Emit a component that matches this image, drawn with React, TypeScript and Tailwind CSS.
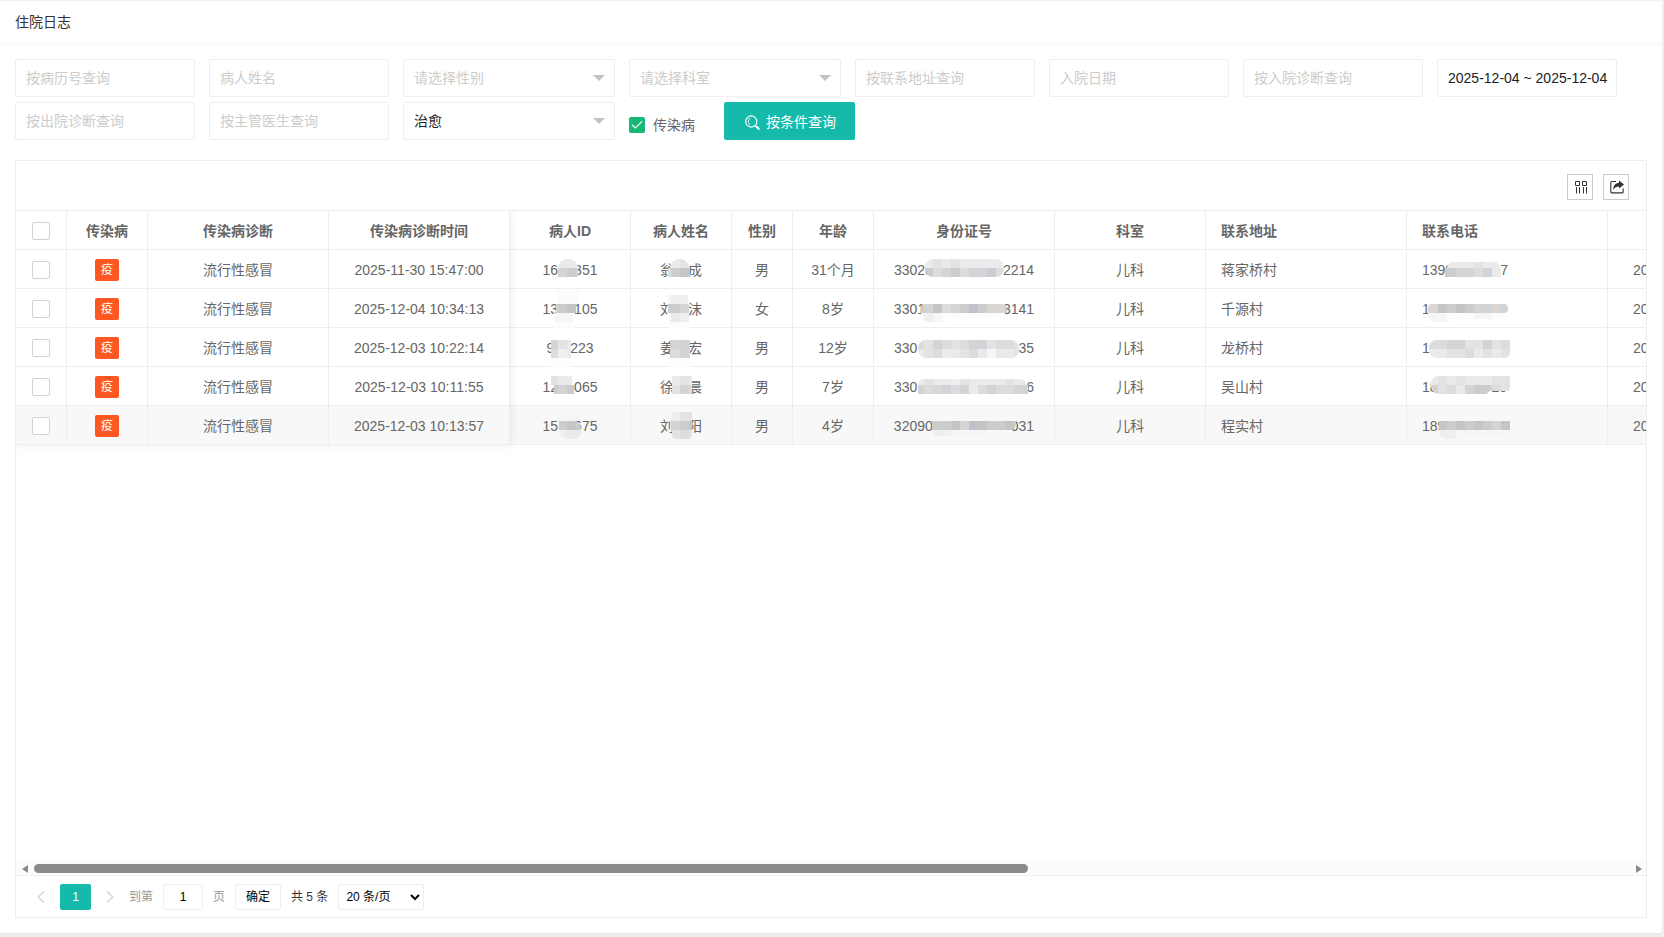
import { useId } from 'react';
import type { ReactNode } from 'react';

interface Band {
  x: number;
  y: number;
  w: number;
  h?: number;
  tones: string;
  // corner radii: top left, top right, bottom right, bottom left
  r?: [number, number, number, number];
}

interface Masked {
  pre: string;
  gap: number;
  post: string;
  bands: Band[];
}

interface Patient {
  time: string;
  id: Masked;
  name: Masked;
  sex: string;
  age: string;
  card: Masked;
  dept: string;
  address: string;
  phone: Masked;
}

const TONES: Record<string, string> = {
  a: '#fcfcfc',
  b: '#f6f6f6',
  c: '#efefef',
  d: '#eaeaea',
  e: '#e3e3e3',
  f: '#dcdcdc',
  g: '#d4d4d4',
  h: '#cccccc',
  i: '#c5c5c5',
  j: '#bfc2c8',
  k: '#d0d3d8',
  l: '#e9ebef',
  m: '#dad7d2',
};

const TILE = 9;

const patients: Patient[] = [
  {
    time: '2025-11-30 15:47:00',
    id: {
      pre: '16',
      gap: 16,
      post: '351',
      bands: [
        { x: 48, y: 9, w: 20, tones: 'ddd', r: [9, 9, 0, 0] },
        { x: 48, y: 18, w: 20, tones: 'ghg' },
      ],
    },
    name: {
      pre: '翁',
      gap: 14,
      post: '成',
      bands: [
        { x: 39, y: 9, w: 19, tones: 'dde', r: [9, 9, 0, 0] },
        { x: 37, y: 18, w: 22, tones: 'fhih' },
      ],
    },
    sex: '男',
    age: '31个月',
    card: {
      pre: '33028',
      gap: 70,
      post: '2214',
      bands: [
        { x: 51, y: 9, w: 79, tones: 'dededddlld', r: [8, 8, 0, 0] },
        { x: 51, y: 18, w: 79, tones: 'hfghfgkhf', r: [0, 0, 8, 8] },
      ],
    },
    dept: '儿科',
    address: '蒋家桥村',
    phone: {
      pre: '1399',
      gap: 47,
      post: '7',
      bands: [
        { x: 40, y: 12, w: 53, h: 6, tones: 'dddeldd', r: [6, 6, 0, 0] },
        { x: 38, y: 18, w: 56, tones: 'hhggfkdf' },
      ],
    },
  },
  {
    time: '2025-12-04 10:34:13',
    id: {
      pre: '13',
      gap: 16,
      post: '105',
      bands: [
        { x: 48, y: 0, w: 20, h: 15, tones: 'aaa' },
        { x: 46, y: 15, w: 20, tones: 'ghih' },
        { x: 44, y: 24, w: 20, tones: 'bbb' },
        { x: 44, y: 33, w: 20, h: 6, tones: 'aaa' },
      ],
    },
    name: {
      pre: '刘',
      gap: 14,
      post: '沫',
      bands: [
        { x: 37, y: 6, w: 20, tones: 'bccb' },
        { x: 37, y: 15, w: 21, tones: 'hhgf' },
        { x: 38, y: 24, w: 20, tones: 'bdcb' },
        { x: 38, y: 33, w: 20, h: 6, tones: 'aaa' },
      ],
    },
    sex: '女',
    age: '8岁',
    card: {
      pre: '3301',
      gap: 78,
      post: '3141',
      bands: [
        { x: 47, y: 15, w: 86, tones: 'hgifghjhmm', r: [4, 5, 0, 0] },
        { x: 47, y: 24, w: 30, tones: 'bcba', r: [0, 0, 9, 8] },
        { x: 77, y: 24, w: 50, h: 5, tones: 'aaaaaa' },
      ],
    },
    dept: '儿科',
    address: '千源村',
    phone: {
      pre: '1',
      gap: 78,
      post: '',
      bands: [
        { x: 21, y: 15, w: 80, tones: 'gmihihgkmk', r: [4, 4, 4, 0] },
        { x: 21, y: 24, w: 24, tones: 'bbba', r: [0, 0, 4, 7] },
        { x: 45, y: 24, w: 52, h: 6, tones: 'aaabba', r: [0, 0, 5, 0] },
      ],
    },
  },
  {
    time: '2025-12-03 10:22:14',
    id: {
      pre: '9',
      gap: 16,
      post: '223',
      bands: [
        { x: 41, y: 12, w: 20, tones: 'gelf' },
        { x: 41, y: 21, w: 20, tones: 'fcde' },
        { x: 41, y: 30, w: 20, tones: 'aaa' },
      ],
    },
    name: {
      pre: '姜',
      gap: 14,
      post: '宏',
      bands: [
        { x: 39, y: 12, w: 20, tones: 'hgkg' },
        { x: 39, y: 21, w: 20, tones: 'gfgf' },
        { x: 39, y: 30, w: 20, tones: 'aaa' },
      ],
    },
    sex: '男',
    age: '12岁',
    card: {
      pre: '330',
      gap: 101,
      post: '35',
      bands: [
        { x: 44, y: 12, w: 101, tones: 'fegfefgkeffe', r: [8, 8, 0, 0] },
        { x: 44, y: 21, w: 101, tones: 'defldefdbdde', r: [0, 0, 8, 8] },
      ],
    },
    dept: '儿科',
    address: '龙桥村',
    phone: {
      pre: '1',
      gap: 78,
      post: '',
      bands: [
        { x: 22, y: 12, w: 81, tones: 'ffggeekefe', r: [8, 0, 0, 0] },
        { x: 22, y: 21, w: 81, tones: 'ddeeflede', r: [0, 0, 5, 8] },
      ],
    },
  },
  {
    time: '2025-12-03 10:11:55',
    id: {
      pre: '12',
      gap: 16,
      post: '065',
      bands: [
        { x: 41, y: 9, w: 21, tones: 'edde' },
        { x: 44, y: 18, w: 20, tones: 'hghg' },
      ],
    },
    name: {
      pre: '徐',
      gap: 14,
      post: '晨',
      bands: [
        { x: 41, y: 9, w: 20, tones: 'delf' },
        { x: 41, y: 18, w: 20, tones: 'egfg' },
      ],
    },
    sex: '男',
    age: '7岁',
    card: {
      pre: '330',
      gap: 109,
      post: '6',
      bands: [
        { x: 44, y: 12, w: 108, h: 6, tones: 'deddcedldde', r: [6, 6, 0, 0] },
        { x: 44, y: 18, w: 110, tones: 'gfmkfglfgffg' },
      ],
    },
    dept: '儿科',
    address: '吴山村',
    phone: {
      pre: '18',
      gap: 54,
      post: '20',
      bands: [
        { x: 24, y: 9, w: 79, tones: 'dededddeed', r: [7, 0, 0, 0] },
        { x: 24, y: 18, w: 59, tones: 'gefdghhg', r: [0, 0, 5, 8] },
        { x: 83, y: 18, w: 20, h: 6, tones: 'gfef', r: [0, 0, 3, 0] },
      ],
    },
  },
  {
    time: '2025-12-03 10:13:57',
    id: {
      pre: '15',
      gap: 16,
      post: '675',
      bands: [
        { x: 48, y: 4, w: 21, h: 11, tones: 'bbbb', r: [4, 0, 0, 0] },
        { x: 49, y: 15, w: 22, tones: 'hihg', r: [0, 7, 0, 0] },
        { x: 50, y: 24, w: 21, tones: 'cddc', r: [0, 0, 7, 7] },
      ],
    },
    name: {
      pre: '刘',
      gap: 14,
      post: '阳',
      bands: [
        { x: 41, y: 6, w: 20, tones: 'ceec' },
        { x: 41, y: 15, w: 20, tones: 'ghih' },
        { x: 41, y: 24, w: 20, tones: 'efee', r: [0, 0, 4, 4] },
      ],
    },
    sex: '男',
    age: '4岁',
    card: {
      pre: '32090',
      gap: 78,
      post: '031',
      bands: [
        { x: 58, y: 15, w: 84, tones: 'hhhigjihhih', r: [0, 0, 6, 0] },
        { x: 58, y: 24, w: 55, h: 6, tones: 'bccbbbb', r: [0, 0, 6, 6] },
      ],
    },
    dept: '儿科',
    address: '程实村',
    phone: {
      pre: '189',
      gap: 62,
      post: '',
      bands: [
        { x: 32, y: 15, w: 71, tones: 'ihihihgik' },
        { x: 32, y: 24, w: 22, tones: 'ccb', r: [0, 0, 6, 8] },
        { x: 54, y: 24, w: 49, h: 6, tones: 'bbbbbb' },
      ],
    },
  },
];

function bandPath({ x, y, w, h = TILE, r = [0, 0, 0, 0] }: Band) {
  const [tl, tr, br, bl] = r;
  return [
    `M${x + tl} ${y}H${x + w - tr}`,
    `A${tr} ${tr} 0 0 1 ${x + w} ${y + tr}V${y + h - br}`,
    `A${br} ${br} 0 0 1 ${x + w - br} ${y + h}H${x + bl}`,
    `A${bl} ${bl} 0 0 1 ${x} ${y + h - bl}V${y + tl}`,
    `A${tl} ${tl} 0 0 1 ${x + tl} ${y}Z`,
  ].join('');
}

// Pixelated patch over the private part of a value
function Mosaic({ bands, anchor }: { bands: Band[]; anchor: number }) {
  const id = useId();
  return (
    <svg className="pointer-events-none absolute left-0 top-0 h-full w-full overflow-visible" shapeRendering="crispEdges" aria-hidden="true">
      {bands.map((band, i) => {
        const start = band.x - ((band.x - anchor) % TILE);
        const count = Math.ceil((band.x + band.w - start) / TILE);
        return (
          <g key={i} clipPath={`url(#${id}-${i})`}>
            <clipPath id={`${id}-${i}`}>
              <path d={bandPath(band)} />
            </clipPath>
            {Array.from({ length: count }, (_, n) => (
              <rect
                key={n}
                x={start + n * TILE}
                y={band.y}
                width={TILE}
                height={band.h ?? TILE}
                fill={TONES[band.tones[n % band.tones.length]]}
              />
            ))}
          </g>
        );
      })}
    </svg>
  );
}

const cell = 'relative h-[39px] border-b border-r border-[#eeeeee] p-0 pt-0.5 whitespace-nowrap';

function MaskedCell({ value, anchor, left = false }: { value: Masked; anchor: number; left?: boolean }) {
  return (
    <td className={`${cell} ${left ? 'pl-[15px] text-left' : 'text-center'}`}>
      {value.pre}
      <span className="inline-block" style={{ width: value.gap }} />
      {value.post}
      <Mosaic bands={value.bands} anchor={anchor} />
    </td>
  );
}

function TextField({ label }: { label: string }) {
  return (
    <input
      type="text"
      aria-label={label}
      placeholder={label}
      className="h-[38px] w-[180px] rounded-xs border border-[#eeeeee] bg-white px-2.5 text-sm text-[#222] outline-none placeholder:text-[#cccccc]"
    />
  );
}

function SelectField({ label, value }: { label: string; value?: string }) {
  return (
    <div className="relative w-[212px]">
      <select
        aria-label={label}
        className={`h-[38px] w-full appearance-none rounded-xs border border-[#eeeeee] bg-white pl-2.5 pr-8 text-sm outline-none ${
          value ? 'text-[#222]' : 'text-[#cccccc]'
        }`}
      >
        <option>{value ?? label}</option>
      </select>
      <span className="pointer-events-none absolute right-2.5 top-4 border-x-6 border-t-6 border-x-transparent border-t-[#c2c2c2]" />
    </div>
  );
}

function SearchIcon() {
  return (
    <svg className="h-[15px] w-[15px]" viewBox="0 0 15 15" fill="none" stroke="currentColor" aria-hidden="true">
      <circle cx="6.3" cy="6.5" r="5.6" strokeWidth="1.1" />
      <path d="M5.2 3.2A3.6 3.6 0 0 0 5.2 9.6" strokeWidth="0.9" />
      <path d="M10.4 10.6L11.6 11.8" strokeWidth="1.1" />
      <path d="M11.6 11.8L13.7 13.8" strokeWidth="2.2" strokeLinecap="round" />
    </svg>
  );
}

function ColumnsIcon() {
  return (
    <svg className="h-3.5 w-3.5" viewBox="0 0 14 14" fill="none" stroke="currentColor" aria-hidden="true">
      <path d="M1.5 1.5h4v4h-4zM8.5 1.5h4v4h-4zM2.5 7v6.5M5.5 7v6.5M9.5 7v6.5M12.5 7v6.5" />
    </svg>
  );
}

function ExportIcon() {
  return (
    <svg className="h-3.5 w-3.5" viewBox="0 0 14 14" fill="none" stroke="currentColor" aria-hidden="true">
      <path d="M6 1.5H2A1.2 1.2 0 0 0 .8 2.7v9A1.2 1.2 0 0 0 2 12.9h10a1.2 1.2 0 0 0 1.2-1.2V8.5" strokeWidth="1.1" />
      <path d="M9 .6L14 4.6L9 8.4V6.4C6.6 6.4 4.8 7.2 3.2 9.8C3.2 5.8 5.4 2.9 9 2.7Z" fill="currentColor" stroke="none" />
    </svg>
  );
}

function PageArrow({ d }: { d: string }) {
  return (
    <svg className="h-3 w-2" viewBox="0 0 8 12" fill="none" stroke="currentColor" strokeWidth="1.2" aria-hidden="true">
      <path d={d} />
    </svg>
  );
}

function ToolButton({ title, children }: { title: string; children: ReactNode }) {
  return (
    <button type="button" title={title} className="flex h-[26px] w-[26px] items-center justify-center border border-[#cccccc] pl-0.5 text-[#333]">
      {children}
    </button>
  );
}

function RowCheckbox({ label }: { label: string }) {
  return (
    <input
      type="checkbox"
      aria-label={label}
      className="mx-auto block h-[18px] w-[18px] appearance-none rounded-xs border border-[#d2d2d2] bg-white"
    />
  );
}

export default function App() {
  const rowBg = (i: number) => (i === patients.length - 1 ? 'bg-[#f8f8f8]' : 'bg-white');

  return (
    <div className="flex min-h-screen flex-col bg-[#f0f0f0] pb-1 pr-0.5 pt-px font-['Liberation_Sans','Noto_Sans_CJK_SC',sans-serif] text-sm text-[#666]">
      <main className="flex flex-1 flex-col rounded-xs bg-white shadow-xs">
        <header className="border-b border-[#f6f6f6] px-[15px]">
          <h1 className="h-[42px] text-sm leading-[42px] text-[#333]">住院日志</h1>
        </header>

        <div className="flex flex-1 flex-col p-[15px]">
          {/* Filters */}
          <form className="flex flex-wrap gap-x-3.5 gap-y-[5px]">
            <TextField label="按病历号查询" />
            <TextField label="病人姓名" />
            <SelectField label="请选择性别" />
            <SelectField label="请选择科室" />
            <TextField label="按联系地址查询" />
            <TextField label="入院日期" />
            <TextField label="按入院诊断查询" />
            <input
              type="text"
              aria-label="日期范围"
              defaultValue="2025-12-04 ~ 2025-12-04"
              className="h-[38px] w-[180px] rounded-xs border border-[#eeeeee] pl-2.5 text-sm text-[#222] outline-none"
            />
            <TextField label="按出院诊断查询" />
            <TextField label="按主管医生查询" />
            <SelectField label="治疗结果" value="治愈" />
            <label className="flex w-[81px] items-center gap-2 pt-2">
              <span className="relative h-4 w-4">
                <input type="checkbox" defaultChecked className="block h-4 w-4 appearance-none rounded-xs bg-[#16b777]" />
                <svg className="pointer-events-none absolute inset-0 h-4 w-4" viewBox="0 0 16 16" fill="none" stroke="#fff" strokeWidth="1.2" aria-hidden="true">
                  <path d="M2.8 7.6L6.2 11L13.2 4.4" />
                </svg>
              </span>
              传染病
            </label>
            <button type="button" className="flex h-[38px] items-center gap-1.5 rounded-xs bg-[#16baaa] pl-[21px] pr-[19px] pt-0.5 text-white">
              <SearchIcon />
              按条件查询
            </button>
          </form>

          {/* Table */}
          <section className="mt-5 flex flex-1 flex-col border border-[#eeeeee]">
            <div className="flex h-[50px] items-center justify-end gap-2.5 border-b border-[#eeeeee] pr-[17px] pt-[3px]">
              <ToolButton title="筛选列">
                <ColumnsIcon />
              </ToolButton>
              <ToolButton title="导出">
                <ExportIcon />
              </ToolButton>
            </div>

            <div className="flex flex-1 items-start overflow-hidden">
              {/* Fixed columns */}
              <table className="relative z-10 w-[494px] shrink-0 table-fixed border-separate border-spacing-0 bg-white text-center shadow-[1px_0_8px_rgba(0,0,0,0.08)]">
                <colgroup>
                  <col className="w-[51px]" />
                  <col className="w-[81px]" />
                  <col className="w-[181px]" />
                  <col className="w-[181px]" />
                </colgroup>
                <thead>
                  <tr>
                    <th className={cell}>
                      <RowCheckbox label="全选" />
                    </th>
                    <th className={cell}>传染病</th>
                    <th className={cell}>传染病诊断</th>
                    <th className={cell}>传染病诊断时间</th>
                  </tr>
                </thead>
                <tbody>
                  {patients.map((p, i) => (
                    <tr key={p.time} className={rowBg(i)}>
                      <td className={cell}>
                        <RowCheckbox label={`选择 ${p.time}`} />
                      </td>
                      <td className={cell}>
                        <span className="mx-auto block h-[22px] w-6 rounded-xs bg-[#ff5722] text-xs leading-[22px] text-white">疫</span>
                      </td>
                      <td className={cell}>流行性感冒</td>
                      <td className={cell}>{p.time}</td>
                    </tr>
                  ))}
                </tbody>
              </table>

              {/* Scrolling columns */}
              <div className="min-w-0 flex-1 overflow-hidden">
                <table className="w-[1279px] table-fixed border-separate border-spacing-0 text-center">
                  <colgroup>
                    <col className="w-[121px]" />
                    <col className="w-[101px]" />
                    <col className="w-[61px]" />
                    <col className="w-[81px]" />
                    <col className="w-[181px]" />
                    <col className="w-[151px]" />
                    <col className="w-[201px]" />
                    <col className="w-[201px]" />
                    <col className="w-[181px]" />
                  </colgroup>
                  <thead>
                    <tr>
                      <th className={cell}>病人ID</th>
                      <th className={cell}>病人姓名</th>
                      <th className={cell}>性别</th>
                      <th className={cell}>年龄</th>
                      <th className={cell}>身份证号</th>
                      <th className={cell}>科室</th>
                      <th className={`${cell} pl-[15px] text-left`}>联系地址</th>
                      <th className={`${cell} pl-[15px] text-left`}>联系电话</th>
                      <th className={cell} />
                    </tr>
                  </thead>
                  <tbody>
                    {patients.map((p, i) => (
                      <tr key={p.time} className={rowBg(i)}>
                        <MaskedCell value={p.id} anchor={3} />
                        <MaskedCell value={p.name} anchor={4} />
                        <td className={cell}>{p.sex}</td>
                        <td className={cell}>{p.age}</td>
                        <MaskedCell value={p.card} anchor={5} />
                        <td className={cell}>{p.dept}</td>
                        <td className={`${cell} pl-[15px] text-left`}>{p.address}</td>
                        <MaskedCell value={p.phone} anchor={4} left />
                        <td className={`${cell} pl-[25px] text-left`}>20</td>
                      </tr>
                    ))}
                  </tbody>
                </table>
              </div>
            </div>

            {/* Horizontal scrollbar */}
            <div className="flex h-3.5 items-center gap-1.5 bg-[#fcfcfc] pl-1.5 pr-1 pt-px">
              <span className="border-y-4 border-r-6 border-y-transparent border-r-[#8b8b8b]" />
              <div className="flex-1">
                <div className="h-[9px] w-[62.3%] rounded-full bg-[#8b8b8b]" />
              </div>
              <span className="border-y-4 border-l-6 border-y-transparent border-l-[#8b8b8b]" />
            </div>

            {/* Pagination */}
            <nav className="flex h-[42px] items-center border-t border-[#eeeeee] pl-[17px] pt-px text-xs text-[#999]">
              <button type="button" title="上一页" className="mr-[11px] flex w-4 justify-center text-[#d2d2d2]">
                <PageArrow d="M7 .5L1.2 6L7 11.5" />
              </button>
              <button type="button" className="h-[26px] w-[31px] rounded-xs bg-[#16baaa] text-white">
                1
              </button>
              <button type="button" title="下一页" className="flex w-[38px] justify-center text-[#d2d2d2]">
                <PageArrow d="M1 .5L6.8 6L1 11.5" />
              </button>
              <label className="flex items-center gap-2.5">
                到第
                <input
                  type="text"
                  defaultValue="1"
                  className="h-[26px] w-10 rounded-xs border border-[#eeeeee] text-center text-xs text-black outline-none"
                />
                页
              </label>
              <button type="button" className="ml-2.5 h-[26px] w-[46px] rounded-xs border border-[#eeeeee] text-black">
                确定
              </button>
              <span className="ml-2.5 text-[#333]">共 5 条</span>
              <select aria-label="每页条数" className="ml-2.5 h-[26px] w-[86px] rounded-xs border border-[#eeeeee] bg-white px-[3px] text-xs text-black outline-none">
                <option>20 条/页</option>
              </select>
            </nav>
          </section>
        </div>
      </main>
    </div>
  );
}
